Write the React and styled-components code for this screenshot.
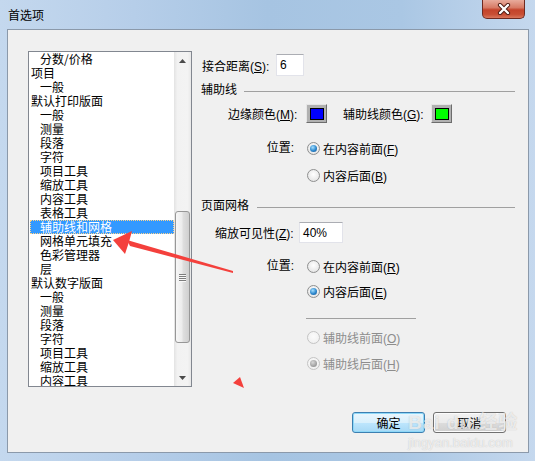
import React from 'react';
import styled, { createGlobalStyle } from 'styled-components';

const GlobalStyle = createGlobalStyle`
  html, body {
    margin: 0;
    padding: 0;
    background: #ffffff;
  }
  body {
    font-family: "Liberation Sans", "Noto Sans CJK SC", sans-serif;
    font-size: 12px;
    color: #000;
  }
`;

const tree = [
  { text: '分数/价格', sub: true },
  { text: '项目' },
  { text: '一般', sub: true },
  { text: '默认打印版面' },
  { text: '一般', sub: true },
  { text: '测量', sub: true },
  { text: '段落', sub: true },
  { text: '字符', sub: true },
  { text: '项目工具', sub: true },
  { text: '缩放工具', sub: true },
  { text: '内容工具', sub: true },
  { text: '表格工具', sub: true },
  { text: '辅助线和网格', sub: true, selected: true },
  { text: '网格单元填充', sub: true },
  { text: '色彩管理器', sub: true },
  { text: '层', sub: true },
  { text: '默认数字版面' },
  { text: '一般', sub: true },
  { text: '测量', sub: true },
  { text: '段落', sub: true },
  { text: '字符', sub: true },
  { text: '项目工具', sub: true },
  { text: '缩放工具', sub: true },
  { text: '内容工具', sub: true },
];

const Window = styled.div`
  position: relative;
  width: 535px;
  height: 461px;
  display: flex;
  flex-direction: column;
  overflow: hidden;
  background: linear-gradient(to right, #c4d8ee 0%, #b6cee9 25%, #a6c4e2 50%, #aac7e4 75%, #c5d8ee 100%);
`;

const TitleBar = styled.div`
  height: 29px;
  flex: none;
  display: flex;
  justify-content: space-between;
  align-items: flex-start;
  padding-left: 8px;
`;

const Title = styled.span`
  line-height: 29px;
  font-family: "Noto Sans CJK SC", sans-serif;
  font-size: 12px;
  color: #000;
`;

const CloseButton = styled.div`
  width: 43px;
  height: 19px;
  margin-right: 10px;
  box-sizing: border-box;
  border: 1px solid #6e2a21;
  border-top: none;
  border-radius: 0 0 5px 5px;
  background: linear-gradient(#e8ab9c 0%, #d77b66 42%, #c4432b 55%, #c84e34 80%, #d9765c 100%);
  display: flex;
  align-items: center;
  justify-content: center;
`;

const Client = styled.div`
  flex: none;
  height: 424px;
  margin: 0 6px 0 7px;
  box-sizing: border-box;
  border: 1px solid #8b99aa;
  background: #f0f0f0;
  display: flex;
  flex-direction: column;
  padding: 21px 0 0 20px;
`;

const Body = styled.div`
  display: flex;
  gap: 9px;
  height: 336px;
`;

const ListBox = styled.div`
  width: 164px;
  height: 336px;
  flex: none;
  box-sizing: border-box;
  border: 1px solid #828790;
  background: #fff;
  display: flex;
`;

const Items = styled.div`
  flex: 1;
  overflow: hidden;
`;

const Item = styled.div`
  height: 14px;
  line-height: 14px;
  white-space: nowrap;
  font-family: "Noto Sans CJK SC", sans-serif;
  font-size: 12px;
  padding-left: ${p => (p.$sub ? 11 : 2)}px;
  ${p => p.$selected && `
    margin-left: 1px;
    padding-left: 10px;
    background: #3399ff;
    color: #fff;
    box-sizing: border-box;
    outline: 1px dotted #ffd38a;
    outline-offset: -1px;
  `}
`;

const ScrollBar = styled.div`
  width: 17px;
  flex: none;
  display: flex;
  flex-direction: column;
  background: linear-gradient(to right, #e3e3e3 0%, #f2f2f2 20%, #f3f3f3 80%, #e8e8e8 100%);
`;

const ArrowBox = styled.div`
  height: 17px;
  flex: none;
  display: flex;
  align-items: center;
  justify-content: center;
`;

const Track = styled.div`
  flex: 1;
  padding: 0 1px;
`;

const Thumb = styled.div`
  margin-top: 142px;
  height: 132px;
  box-sizing: border-box;
  border: 1px solid #979797;
  border-radius: 3px;
  background: linear-gradient(to right, #f7f7f7 0%, #ececec 45%, #dedede 55%, #cfcfcf 100%);
  display: flex;
  flex-direction: column;
  align-items: center;
  justify-content: center;
  gap: 1px;
`;

const Grip = styled.span`
  width: 7px;
  height: 1px;
  background: #7d7d7d;
  box-shadow: 0 1px 0 #f8f8f8;
`;

const Form = styled.div`
  flex: 1;
  margin-top: 3px;
  padding-right: 13px;
  display: flex;
  flex-direction: column;
`;

const Row = styled.div`
  display: flex;
  align-items: center;
  height: ${p => p.$h}px;
  margin-top: ${p => p.$mt || 0}px;
  padding-left: ${p => p.$indent || 0}px;
`;

const Label = styled.span`
  width: ${p => p.$w}px;
  margin-left: ${p => p.$ml || 0}px;
  flex: none;
  white-space: nowrap;
  color: ${p => (p.$disabled ? '#8d8d8d' : '#000')};
`;

const TextBox = styled.div`
  width: ${p => p.$w}px;
  height: ${p => p.$h}px;
  box-sizing: border-box;
  background: #fff;
  border: 1px solid #e2e3ea;
  border-top-color: #abadb3;
  padding: 0 3px;
  display: flex;
  align-items: center;
`;

const GroupHeader = styled.div`
  display: flex;
  align-items: center;
  gap: ${p => p.$gap}px;
  height: 16px;
  margin-top: ${p => p.$mt}px;
  white-space: nowrap;
`;

const Rule = styled.div`
  flex: 1;
  height: 1px;
  margin-top: 6px;
  background: #a0a0a0;
`;

const Swatch = styled.div`
  width: 21px;
  height: 19px;
  flex: none;
  box-sizing: border-box;
  border: 1px solid #e6e6e6;
  border-right-color: #6d6d6d;
  border-bottom-color: #6d6d6d;
  background: #b1b1b1;
  display: flex;
  align-items: center;
  justify-content: center;
`;

const SwatchColor = styled.div`
  width: 14px;
  height: 12px;
  box-sizing: border-box;
  border: 1px solid #000;
  background: ${p => p.$color};
`;

const PositionGroup = styled.div`
  display: grid;
  grid-template-columns: 106px 1fr;
  margin-top: ${p => p.$mt}px;
`;

const GroupLabel = styled.div`
  height: 16px;
  line-height: 16px;
  text-align: right;
  padding-right: 13px;
`;

const Options = styled.div`
  display: flex;
  flex-direction: column;
  gap: ${p => p.$gap}px;
`;

const RadioRow = styled.div`
  display: flex;
  align-items: center;
  gap: 3px;
  height: 16px;
  white-space: nowrap;
  margin-top: ${p => p.$mt || 0}px;
  color: ${p => (p.$disabled ? '#8d8d8d' : '#000')};
`;

const RadioCircle = styled.span`
  width: 13px;
  height: 13px;
  flex: none;
  box-sizing: border-box;
  border-radius: 50%;
  border: 1px solid ${p => (p.$disabled ? '#c4c4c4' : '#8e8f8f')};
  background: ${p => (p.$disabled
    ? 'radial-gradient(circle at 50% 40%, #fbfbfb, #ededed)'
    : 'radial-gradient(circle at 50% 40%, #ffffff, #dedede)')};
  display: flex;
  align-items: center;
  justify-content: center;
`;

const RadioDot = styled.span`
  width: 7px;
  height: 7px;
  border-radius: 50%;
  background: ${p => (p.$disabled
    ? 'radial-gradient(circle at 40% 35%, #d8d8d8, #9a9a9a 70%)'
    : 'radial-gradient(circle at 40% 35%, #a6e0ff, #2b86cc 55%, #134f8c 100%)')};
`;

const Separator = styled.div`
  width: 110px;
  height: 1px;
  margin: 10px 0 0 -1px;
  background: #a0a0a0;
`;

const Footer = styled.div`
  display: flex;
  justify-content: flex-end;
  gap: 8px;
  margin-top: 25px;
  padding-right: 22px;
`;

const Button = styled.div`
  width: 73px;
  height: 21px;
  box-sizing: border-box;
  border-radius: 3px;
  display: flex;
  align-items: center;
  justify-content: center;
  font-family: "Noto Sans CJK SC", sans-serif;
  font-size: 12px;
  border: 1px solid ${p => (p.$default ? '#3c7fb1' : '#707070')};
  box-shadow: ${p => (p.$default ? 'inset 0 0 0 1px #8ed8f8' : 'inset 0 0 0 1px #fcfcfc')};
  background: ${p => (p.$default
    ? 'linear-gradient(#eaf6fd 0%, #d9f0fc 50%, #bee6fd 50%, #a7d9f5 100%)'
    : 'linear-gradient(#f2f2f2 0%, #ebebeb 50%, #dddddd 50%, #cfcfcf 100%)')};
`;

const Watermark = styled.div`
  position: absolute;
  left: 408px;
  top: 412px;
  pointer-events: none;
  color: rgba(255, 255, 255, 0.7);
  text-shadow: 0 0 1px rgba(120, 120, 120, 0.45);
  display: flex;
  flex-direction: column;
`;

const WatermarkBrand = styled.span`
  font-family: "Liberation Sans", "Noto Sans CJK SC", sans-serif;
  font-size: 19px;
  font-weight: bold;
  line-height: 22px;
  letter-spacing: 1px;
`;

const WatermarkUrl = styled.span`
  font-family: "Liberation Sans", sans-serif;
  font-size: 13px;
  line-height: 14px;
  margin-top: 2px;
`;

const Overlay = styled.svg`
  position: absolute;
  left: 0;
  top: 0;
  pointer-events: none;
`;

const Key = ({ k }) => (
  <>(<u>{k}</u>)</>
);

const Radio = ({ checked, disabled, children, mt }) => (
  <RadioRow $disabled={disabled} $mt={mt}>
    <RadioCircle $disabled={disabled}>
      {checked && <RadioDot $disabled={disabled} />}
    </RadioCircle>
    <span>{children}</span>
  </RadioRow>
);

const Tri = ({ down }) => (
  <svg width="7" height="4" viewBox="0 0 7 4">
    <path d={down ? 'M0 0 H7 L3.5 4 Z' : 'M0 4 H7 L3.5 0 Z'} fill="#4a4a4a" />
  </svg>
);

export default function App() {
  return (
    <Window>
      <GlobalStyle />
      <TitleBar>
        <Title>首选项</Title>
        <CloseButton>
          <svg width="14" height="12" viewBox="0 0 14 12">
            <path d="M3 2 L11 10 M11 2 L3 10" stroke="#4d1a12" strokeWidth="4.2" strokeLinecap="round" />
            <path d="M3 2 L11 10 M11 2 L3 10" stroke="#ffffff" strokeWidth="2.4" strokeLinecap="round" />
          </svg>
        </CloseButton>
      </TitleBar>

      <Client>
        <Body>
          <ListBox>
            <Items>
              {tree.map((it, i) => (
                <Item key={i} $sub={it.sub} $selected={it.selected}>{it.text}</Item>
              ))}
            </Items>
            <ScrollBar>
              <ArrowBox><Tri /></ArrowBox>
              <Track>
                <Thumb>
                  <Grip />
                  <Grip />
                  <Grip />
                  <Grip />
                </Thumb>
              </Track>
              <ArrowBox><Tri down /></ArrowBox>
            </ScrollBar>
          </ListBox>

          <Form>
            <Row $h={22} $indent={1}>
              <Label $w={74}>接合距离<Key k="S" />:</Label>
              <TextBox $w={28} $h={22}>6</TextBox>
            </Row>

            <GroupHeader $mt={4} $gap={7}>
              <span>辅助线</span>
              <Rule />
            </GroupHeader>

            <Row $h={19} $mt={8} $indent={27}>
              <Label $w={78}>边缘颜色<Key k="M" />:</Label>
              <Swatch><SwatchColor $color="#0000ff" /></Swatch>
              <Label $w={88} $ml={16}>辅助线颜色<Key k="G" />:</Label>
              <Swatch><SwatchColor $color="#00ff00" /></Swatch>
            </Row>

            <PositionGroup $mt={17}>
              <GroupLabel>位置:</GroupLabel>
              <Options $gap={11}>
                <Radio checked>在内容前面<Key k="F" /></Radio>
                <Radio>内容后面<Key k="B" /></Radio>
              </Options>
            </PositionGroup>

            <GroupHeader $mt={13} $gap={8}>
              <span>页面网格</span>
              <Rule />
            </GroupHeader>

            <Row $h={21} $mt={10} $indent={14}>
              <Label $w={84}>缩放可见性<Key k="Z" />:</Label>
              <TextBox $w={44} $h={21}>40%</TextBox>
            </Row>

            <PositionGroup $mt={15}>
              <GroupLabel>位置:</GroupLabel>
              <Options $gap={9}>
                <Radio>在内容前面<Key k="R" /></Radio>
                <Radio checked>内容后面<Key k="E" /></Radio>
                <div>
                  <Separator />
                  <Radio disabled mt={10}>辅助线前面<Key k="O" /></Radio>
                  <Radio disabled checked mt={10}>辅助线后面<Key k="H" /></Radio>
                </div>
              </Options>
            </PositionGroup>
          </Form>
        </Body>

        <Footer>
          <Button $default>确定</Button>
          <Button>取消</Button>
        </Footer>
      </Client>

      <Watermark>
        <WatermarkBrand>Bai du 经验</WatermarkBrand>
        <WatermarkUrl>jingyan.baidu.com</WatermarkUrl>
      </Watermark>

      <Overlay width="535" height="461" viewBox="0 0 535 461">
        <polygon points="113,240 132,231 129,242 125,254" fill="#f4403c" />
        <polygon points="127,240 130,246 233,273 233,271" fill="#f4403c" />
        <polygon points="233,383 240,377 244,388" fill="#f4403c" />
      </Overlay>
    </Window>
  );
}
